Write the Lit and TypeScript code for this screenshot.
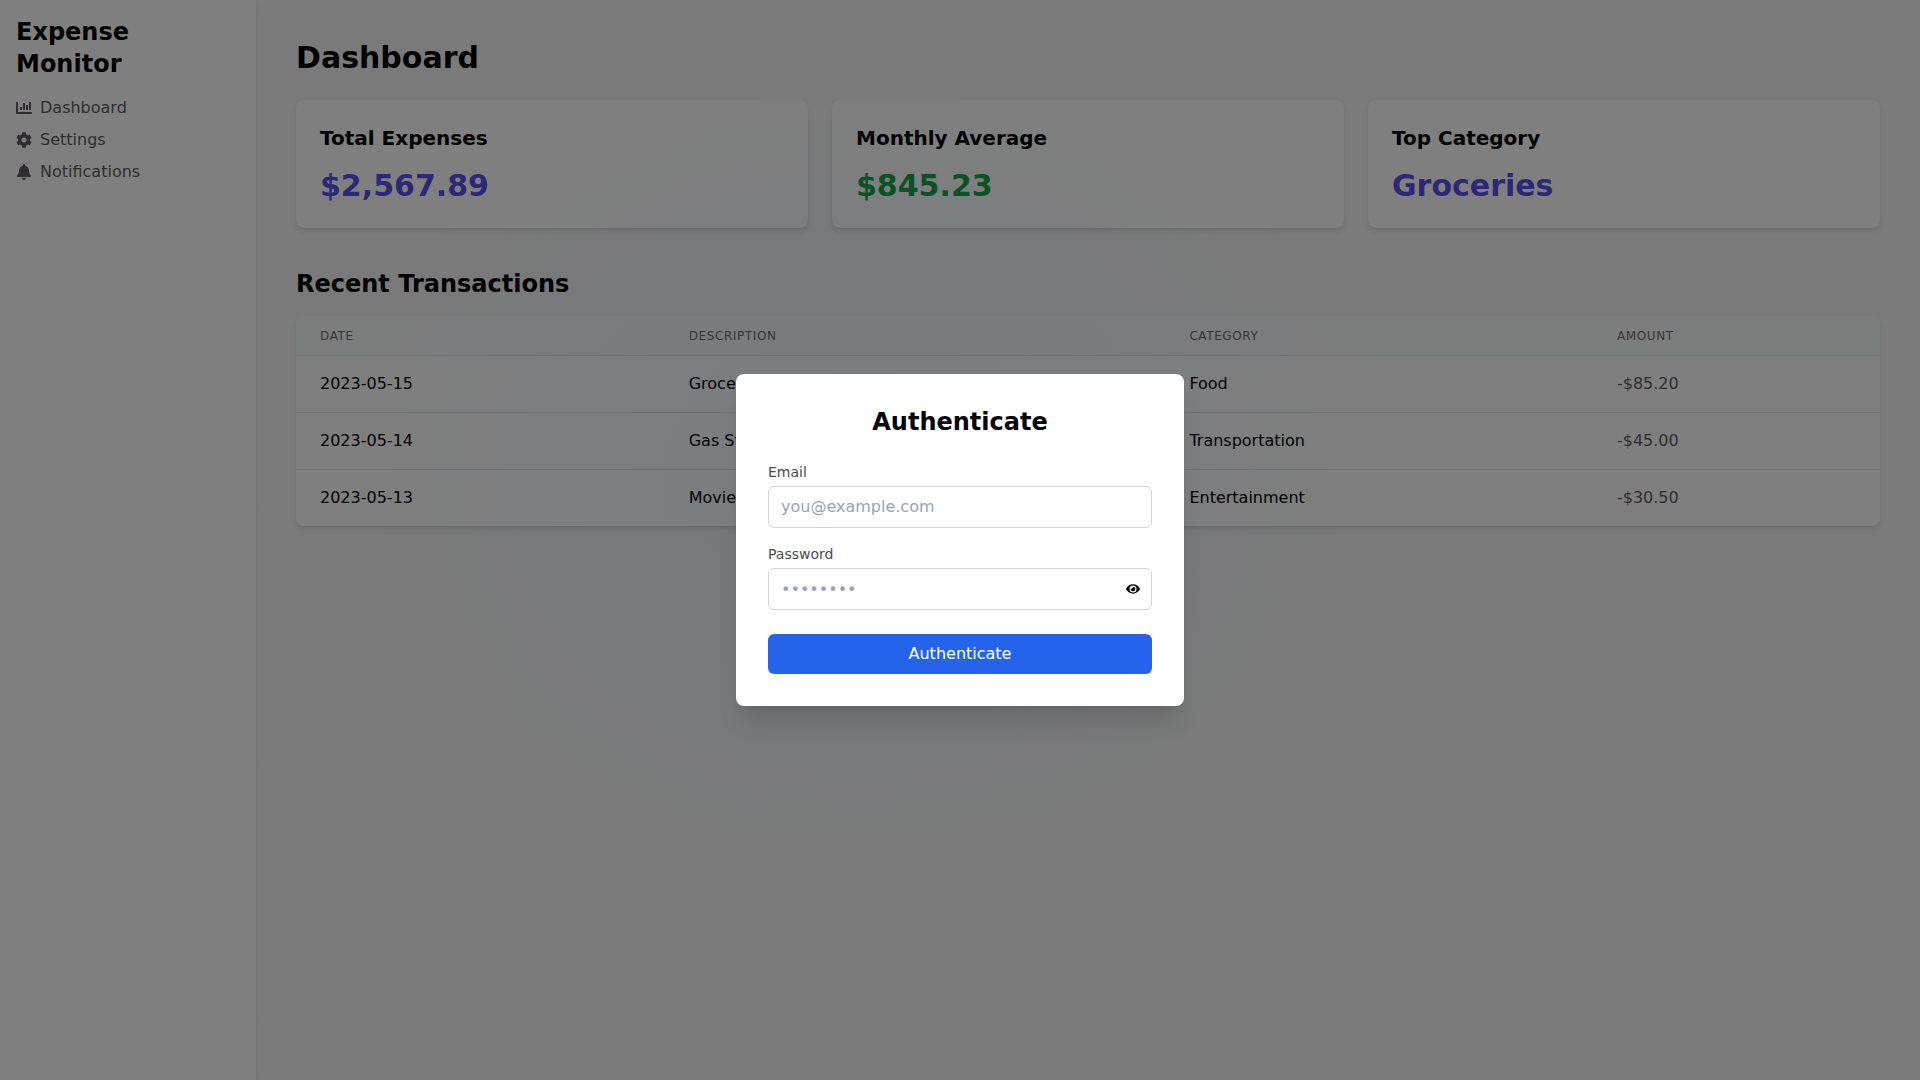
import { LitElement, html, css, svg } from "lit";
import { customElement } from "lit/decorators.js";

const icons = {
  chart: ["0 0 512 512", "M332.8 320h38.4c6.4 0 12.8-6.4 12.8-12.8V172.8c0-6.4-6.4-12.8-12.8-12.8h-38.4c-6.4 0-12.8 6.4-12.8 12.8v134.4c0 6.4 6.4 12.8 12.8 12.8zm96 0h38.4c6.4 0 12.8-6.4 12.8-12.8V76.8c0-6.4-6.4-12.8-12.8-12.8h-38.4c-6.4 0-12.8 6.4-12.8 12.8v230.4c0 6.4 6.4 12.8 12.8 12.8zm-288 0h38.4c6.4 0 12.8-6.4 12.8-12.8v-70.4c0-6.4-6.4-12.8-12.8-12.8h-38.4c-6.4 0-12.8 6.4-12.8 12.8v70.4c0 6.4 6.4 12.8 12.8 12.8zm96 0h38.4c6.4 0 12.8-6.4 12.8-12.8V108.8c0-6.4-6.4-12.8-12.8-12.8h-38.4c-6.4 0-12.8 6.4-12.8 12.8v198.4c0 6.4 6.4 12.8 12.8 12.8zM496 384H64V80c0-8.84-7.16-16-16-16H16C7.16 64 0 71.16 0 80v336c0 17.67 14.33 32 32 32h464c8.84 0 16-7.16 16-16v-32c0-8.84-7.16-16-16-16z"],
  cog: ["0 0 512 512", "M487.4 315.7l-42.6-24.6c4.3-23.2 4.3-47 0-70.2l42.6-24.6c4.9-2.8 7.1-8.6 5.5-14-11.1-35.6-30-67.8-54.7-94.6-3.8-4.1-10-5.1-14.8-2.3L380.8 110c-17.9-15.4-38.5-27.3-60.8-35.1V25.8c0-5.6-3.9-10.5-9.4-11.7-36.7-8.2-74.3-7.8-109.2 0-5.5 1.2-9.4 6.1-9.4 11.7V75c-22.2 7.9-42.8 19.8-60.8 35.1L88.7 85.5c-4.9-2.8-11-1.9-14.8 2.3-24.7 26.7-43.6 58.9-54.7 94.6-1.7 5.4.6 11.2 5.5 14L67.3 221c-4.3 23.2-4.3 47 0 70.2l-42.6 24.6c-4.9 2.8-7.1 8.6-5.5 14 11.1 35.6 30 67.8 54.7 94.6 3.8 4.1 10 5.1 14.8 2.3l42.6-24.6c17.9 15.4 38.5 27.3 60.8 35.1v49.2c0 5.6 3.9 10.5 9.4 11.7 36.7 8.2 74.3 7.8 109.2 0 5.5-1.2 9.4-6.1 9.4-11.7v-49.2c22.2-7.9 42.8-19.8 60.8-35.1l42.6 24.6c4.9 2.8 11 1.9 14.8-2.3 24.7-26.7 43.6-58.9 54.7-94.6 1.5-5.5-.7-11.3-5.6-14.1zM256 336c-44.1 0-80-35.9-80-80s35.9-80 80-80 80 35.9 80 80-35.9 80-80 80z"],
  bell: ["0 0 448 512", "M224 512c35.32 0 63.97-28.65 63.97-64H160.03c0 35.35 28.65 64 63.97 64zm215.39-149.71c-19.32-20.76-55.47-51.99-55.47-154.29 0-77.7-54.48-139.9-127.94-155.16V32c0-17.67-14.32-32-31.98-32s-31.98 14.33-31.98 32v20.84C118.56 68.1 64.08 130.3 64.08 208c0 102.3-36.15 133.53-55.47 154.29-6 6.45-8.66 14.16-8.61 21.71.11 16.4 12.98 32 32.1 32h383.8c19.12 0 32-15.6 32.1-32 .05-7.55-2.61-15.27-8.61-21.71z"],
  eye: ["0 0 576 512", "M572.52 241.4C518.29 135.59 410.93 64 288 64S57.68 135.64 3.48 241.41a32.35 32.35 0 0 0 0 29.19C57.71 376.41 165.07 448 288 448s230.32-71.64 284.52-177.41a32.35 32.35 0 0 0 0-29.19zM288 400a144 144 0 1 1 144-144 143.93 143.93 0 0 1-144 144zm0-240a95.31 95.31 0 0 0-25.31 3.79 47.85 47.85 0 0 1-66.9 66.9A95.78 95.78 0 1 0 288 160z"],
} as const;

const icon = (name: keyof typeof icons, cls: string) => {
  const [box, d] = icons[name];
  return html`<svg class=${cls} viewBox=${box} aria-hidden="true">${svg`<path fill="currentColor" d=${d}></path>`}</svg>`;
};

const stats = [
  { label: "Total Expenses", value: "$2,567.89", cls: "indigo" },
  { label: "Monthly Average", value: "$845.23", cls: "green" },
  { label: "Top Category", value: "Groceries", cls: "indigo" },
];
const rows = [
  ["2023-05-15", "Grocery Store", "Food", "-$85.20"],
  ["2023-05-14", "Gas Station", "Transportation", "-$45.00"],
  ["2023-05-13", "Movie Tickets", "Entertainment", "-$30.50"],
];

@customElement("app-root")
export class AppRoot extends LitElement {
  static styles = css`
    :host { display: block; height: 1080px; overflow: hidden; position: relative; font-family: "DejaVu Sans", sans-serif; color: #000; }
    * { box-sizing: border-box; }
    .layout { display: flex; height: 1080px; background: #f5f5f5; }
    .sidebar { width: 256px; flex: none; background: #fff; padding: 16px; box-shadow: 0 4px 6px -1px rgba(0,0,0,.1), 0 2px 4px -2px rgba(0,0,0,.1); }
    .brand { margin: 0 0 16px; font-size: 24px; line-height: 32px; font-weight: 700; }
    nav { display: flex; flex-direction: column; gap: 8px; }
    nav a { display: flex; align-items: center; gap: 8px; font-size: 16px; line-height: 24px; color: #5e5a60; }
    .nav-icon { width: 16px; height: 16px; flex: none; }
    main { flex: 1; min-width: 0; padding: 40px; }
    h1 { margin: 0 0 24px; font-size: 30px; line-height: 36px; font-weight: 700; }
    .cards { display: grid; grid-template-columns: repeat(3, 1fr); gap: 24px; margin-bottom: 40px; }
    .card { background: #fff; border-radius: 8px; padding: 24px; box-shadow: 0 4px 6px -1px rgba(0,0,0,.1), 0 2px 4px -2px rgba(0,0,0,.1); }
    .card h3 { margin: 0 0 16px; font-size: 20px; line-height: 28px; font-weight: 600; }
    .value { font-size: 30px; line-height: 36px; font-weight: 700; }
    .indigo { color: #5850ec; }
    .green { color: #16a34a; }
    h2 { margin: 0 0 16px; font-size: 24px; line-height: 32px; font-weight: 600; }
    .table-wrap { background: #fff; border-radius: 8px; overflow: hidden; box-shadow: 0 4px 6px -1px rgba(0,0,0,.1), 0 2px 4px -2px rgba(0,0,0,.1); }
    table { width: 100%; border-collapse: collapse; table-layout: fixed; }
    col.c1 { width: 368.7px; }
    col.c2 { width: 500.7px; }
    col.c3 { width: 427.6px; }
    col.c4 { width: 287px; }
    th { background: #f9fafb; padding: 13px 24px 11px; text-align: left; font-size: 12px; line-height: 15px; font-weight: 500; letter-spacing: .6px; text-transform: uppercase; color: #6e6a70; }
    td { padding: 16px 24px; font-size: 16px; line-height: 24px; border-top: 1px solid #e5e7eb; }
    td.amount { color: #5e5a60; }
    .backdrop { position: absolute; inset: 0; background: radial-gradient(ellipse 520px 430px at 860px 480px, rgba(0,4,12,.52), rgba(0,0,0,.5)); display: flex; align-items: center; justify-content: center; }
    .modal { width: 448px; background: #fff; border-radius: 8px; padding: 32px; box-shadow: 0 20px 25px -5px rgba(0,0,0,.1), 0 8px 10px -6px rgba(0,0,0,.1); }
    .modal h2 { margin: 0 0 24px; font-size: 24px; line-height: 32px; font-weight: 700; text-align: center; }
    .field { margin-bottom: 16px; }
    .field.last { margin-bottom: 24px; }
    label { display: block; margin-bottom: 4px; font-size: 14px; line-height: 20px; font-weight: 500; color: #4b4b52; }
    .input-wrap { position: relative; }
    input { display: block; width: 100%; height: 42px; padding: 8px 12px; border: 1px solid #d1d5db; border-radius: 6px; font: inherit; font-size: 16px; line-height: 24px; background: #fff; outline: none; }
    input.email { padding: 7px 12px 9px; }
    input::placeholder { color: #9ca3b8; opacity: 1; }
    .eye { position: absolute; right: 12px; top: 14px; width: 14px; height: 14px; }
    button { display: block; width: 100%; height: 40px; border: 0; border-radius: 6px; background: #2563eb; color: #fff; font: inherit; font-size: 16px; line-height: 24px; }
  `;

  render() {
    return html`
      <div class="layout">
        <aside class="sidebar">
          <div class="brand">Expense Monitor</div>
          <nav>
            <a>${icon("chart", "nav-icon")}Dashboard</a>
            <a>${icon("cog", "nav-icon")}Settings</a>
            <a>${icon("bell", "nav-icon")}Notifications</a>
          </nav>
        </aside>
        <main>
          <h1>Dashboard</h1>
          <section class="cards">
            ${stats.map((s) => html`<div class="card"><h3>${s.label}</h3><div class="value ${s.cls}">${s.value}</div></div>`)}
          </section>
          <h2>Recent Transactions</h2>
          <div class="table-wrap">
            <table>
              <colgroup><col class="c1" /><col class="c2" /><col class="c3" /><col class="c4" /></colgroup>
              <thead><tr><th>Date</th><th>Description</th><th>Category</th><th>Amount</th></tr></thead>
              <tbody>
                ${rows.map((r) => html`<tr><td>${r[0]}</td><td>${r[1]}</td><td>${r[2]}</td><td class="amount">${r[3]}</td></tr>`)}
              </tbody>
            </table>
          </div>
        </main>
      </div>
      <div class="backdrop">
        <div class="modal">
          <h2>Authenticate</h2>
          <div class="field">
            <label>Email</label>
            <input class="email" type="email" placeholder="you@example.com" />
          </div>
          <div class="field last">
            <label>Password</label>
            <div class="input-wrap">
              <input type="password" placeholder="••••••••" />
              ${icon("eye", "eye")}
            </div>
          </div>
          <button>Authenticate</button>
        </div>
      </div>
    `;
  }
}
